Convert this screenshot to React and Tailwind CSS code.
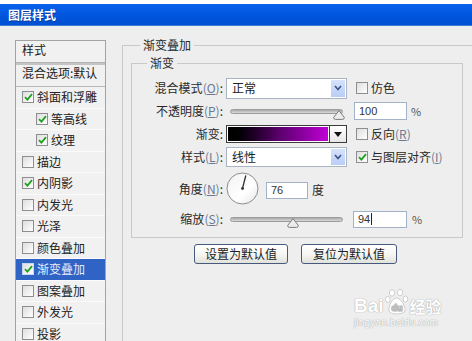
import React from "react";

function Check({ checked, className = "" }) {
  return (
    <span
      className={`inline-flex shrink-0 w-[12px] h-[12px] items-center justify-center border border-[#8e8e8e] bg-linear-to-br from-[#dedede] to-white ${className}`}
    >
      {checked && (
        <svg width="9" height="8" viewBox="0 0 9 8">
          <path d="M1 4.2 L3.4 6.6 L8 1.2" stroke="#1fa31f" strokeWidth="1.8" fill="none" />
        </svg>
      )}
    </span>
  );
}

function Key({ k }) {
  return (
    <span className="text-[#6b7a92]">
      (<span className="underline">{k}</span>)
    </span>
  );
}

function Select({ value, h }) {
  return (
    <div className={`flex w-[121px] ${h} bg-white border border-[#a9b4c4]`}>
      <div className="flex-1 flex items-center pl-[5px] text-[12px] text-[#222]">{value}</div>
      <div className="w-[14px] m-[1px] flex items-center justify-center bg-linear-to-b from-[#d6e2fb] to-[#b9cdf6]">
        <svg width="8" height="6" viewBox="0 0 8 6">
          <polyline points="1,1 4,4.5 7,1" stroke="#3b5486" strokeWidth="1.6" fill="none" />
        </svg>
      </div>
    </div>
  );
}

function Slider({ pos }) {
  return (
    <div className="relative w-[121px] h-full flex items-center px-[4px]">
      <div className="w-[113px] h-[5px] rounded-full border border-[#9c9c9c] bg-linear-to-b from-[#a9a9a9] to-[#dadada]" />
      <svg
        className="absolute top-[50%] mt-[-1px]"
        style={{ left: pos }}
        width="12"
        height="10"
        viewBox="0 0 12 10"
      >
        <path d="M6 0.6 L11.3 7.4 Q11.5 9.4 9.5 9.4 L2.5 9.4 Q0.5 9.4 0.7 7.4 Z" fill="#ececec" stroke="#7b7b7b" strokeWidth="1" />
      </svg>
    </div>
  );
}

function Input({ value, w, h, caret }) {
  return (
    <div
      className={`flex items-center ${w} ${h} bg-white border border-[#a2b2c8] pl-[4px] text-[11px] text-[#333] font-['Liberation_Sans',sans-serif]`}
    >
      {value}
      {caret && <span className="w-[1px] h-[12px] bg-[#222] ml-[1px]" />}
    </div>
  );
}

function Dial() {
  return (
    <svg width="33" height="33" viewBox="0 0 33 33">
      <defs>
        <linearGradient id="dg" x1="0" y1="0" x2="1" y2="1">
          <stop offset="0" stopColor="#f2f2f2" />
          <stop offset="0.6" stopColor="#ffffff" />
          <stop offset="1" stopColor="#e4e4e4" />
        </linearGradient>
      </defs>
      <circle cx="16.5" cy="16.5" r="15.5" fill="url(#dg)" stroke="#8c8c8c" strokeWidth="1" />
      <line x1="16.5" y1="16.5" x2="19.8" y2="3.5" stroke="#333" strokeWidth="1.3" />
      <circle cx="16.5" cy="16.5" r="1.4" fill="#333" />
    </svg>
  );
}

const items = [
  { t: "斜面和浮雕", c: true },
  { t: "等高线", c: true, ind: true },
  { t: "纹理", c: true, ind: true },
  { t: "描边", c: false },
  { t: "内阴影", c: true },
  { t: "内发光", c: false },
  { t: "光泽", c: false },
  { t: "颜色叠加", c: false },
  { t: "渐变叠加", c: true, sel: true },
  { t: "图案叠加", c: false },
  { t: "外发光", c: false },
  { t: "投影", c: false },
];

function LeftList() {
  return (
    <div className="ml-[15px] mt-[14px] w-[91px] shrink-0 border border-[#a3a3a3] bg-[#f1f1f1] text-[12px] text-[#222]">
      <div className="h-[21px] pt-[2px] px-[6px] leading-[14px]">样式</div>
      <div className="h-[3px] bg-[#c4c4c4] border-t border-[#b2b2b2]" />
      <div className="h-[21px] pt-[1px] px-[6px] leading-[14px] whitespace-nowrap">混合选项:默认</div>
      <div className="h-[1px] bg-[#b8b8b8]" />
      {items.map((it) => (
        <div
          key={it.t}
          className={`h-[21.5px] flex items-center border-b border-[#fbfbfb] ${it.sel ? "bg-[#2f64c4] text-[#e4ecff]" : ""} ${it.ind ? "pl-[20px]" : "pl-[6px]"}`}
        >
          <Check checked={it.c} className={it.sel ? "border-[#c8d6f2]" : ""} />
          <span className="ml-[3px] whitespace-nowrap leading-[14px]">{it.t}</span>
        </div>
      ))}
    </div>
  );
}

function Row({ label, h, children }) {
  return (
    <div className={`flex items-center ${h}`}>
      <div className="w-[91px] text-right whitespace-nowrap">{label}</div>
      <div className="ml-[3px] flex items-center h-full">{children}</div>
    </div>
  );
}

function Button({ children, w }) {
  return (
    <div
      className={`${w} h-[20px] flex items-center justify-center rounded-[3px] border border-[#47597c] bg-linear-to-b from-white via-[#f6f6f3] to-[#e2e2dc] text-[12px] text-[#222]`}
    >
      {children}
    </div>
  );
}

function Watermark() {
  return (
    <div className="absolute left-[354px] top-[288px] flex flex-col items-start text-white [text-shadow:0_0_1px_#a9a9a9,0_0_1px_#a9a9a9]">
      <div className="flex items-end h-[28px]">
        <span className="text-[19px] font-bold leading-[20px] font-['Liberation_Sans',sans-serif]">Bai</span>
        <svg width="24" height="28" viewBox="0 0 24 28" className="mx-[1px]">
          <g fill="#ffffff" stroke="#c2c2c2" strokeWidth="0.8">
            <ellipse cx="7" cy="5" rx="2.6" ry="3.3" />
            <ellipse cx="15" cy="4.5" rx="2.6" ry="3.3" />
            <ellipse cx="2.8" cy="11.5" rx="2.4" ry="3" />
            <ellipse cx="20.5" cy="11" rx="2.4" ry="3" />
            <path d="M11.5 10 C7 10 3 19 4 23 C5 27 18 27 20 23 C21 19 16 10 11.5 10 Z" />
          </g>
          <text x="12" y="23" textAnchor="middle" fontSize="9" fontWeight="bold" fill="#ffffff" stroke="#bdbdbd" strokeWidth="0.5" fontFamily="Liberation Sans, sans-serif">du</text>
        </svg>
        <span className="text-[16px] leading-[20px] font-bold">经验</span>
      </div>
      <div className="text-[10px] leading-[12px] mt-[1px] font-['Liberation_Sans',sans-serif] tracking-[0.2px]">jingyan.baidu.com</div>
    </div>
  );
}

export default function App() {
  return (
    <div className="relative w-[472px] h-[341px] overflow-hidden bg-[#eeeeee] flex flex-col font-['Noto_Sans_CJK_SC','Noto_Sans',sans-serif] text-[12px] text-[#2a2a2a]">
      <div className="h-[4px] bg-white shrink-0" />
      <div className="h-[22px] shrink-0 flex items-center pl-[8px] bg-linear-to-b from-[#0b62ec] via-[#0056de] to-[#0050d2] border-b border-[#3f7bd6] text-white font-bold text-[12px] [text-shadow:1px_1px_0_#0a3aa0]">
        图层样式
      </div>
      <div className="flex items-start flex-1">
        <LeftList />
        <div className="ml-[16px] mt-[19px] w-[380px] h-[330px] shrink-0 border-l border-t border-[#c9c9c9]">
          <div className="-mt-[8px] ml-[17px] px-[3px] w-fit leading-[14px] bg-[#eeeeee]">渐变叠加</div>
          <div className="ml-[8px] mt-[11px] w-[332px] border border-[#c9c9c9]">
            <div className="-mt-[8px] ml-[15px] px-[3px] w-fit leading-[14px] bg-[#eeeeee]">渐变</div>
            <div className="mt-[7px] pb-[7px] flex flex-col">
              <Row label={<>混合模式<Key k="O" />:</>} h="h-[22px]">
                <Select value="正常" h="h-[21px]" />
                <Check className="ml-[9px]" />
                <span className="ml-[3px]">仿色</span>
              </Row>
              <Row label={<>不透明度<Key k="P" />:</>} h="h-[24px]">
                <Slider pos="107px" />
                <div className="ml-[7px]">
                  <Input value="100" w="w-[53px]" h="h-[18px]" />
                </div>
                <span className="ml-[4px] text-[11px] text-[#555]">%</span>
              </Row>
              <Row label="渐变:" h="h-[22px]">
                <div className="w-[104px] h-[18px] border border-[#3c3c3c] p-[1px] bg-white">
                  <div className="w-full h-full bg-linear-to-r from-black via-[#58006a] to-[#c000d6]" />
                </div>
                <div className="w-[17px] h-[18px] border border-l-0 border-[#3c3c3c] bg-linear-to-b from-white to-[#e6e6e6] flex items-center justify-center">
                  <svg width="8" height="5" viewBox="0 0 8 5">
                    <path d="M0 0 L8 0 L4 5 Z" fill="#111" />
                  </svg>
                </div>
                <Check className="ml-[9px]" />
                <span className="ml-[3px]">反向<Key k="R" /></span>
              </Row>
              <Row label={<>样式<Key k="L" />:</>} h="h-[24px]">
                <Select value="线性" h="h-[20px]" />
                <Check checked className="ml-[9px]" />
                <span className="ml-[3px]">与图层对齐<Key k="I" /></span>
              </Row>
              <Row label={<>角度<Key k="N" />:</>} h="h-[39px]">
                <Dial />
                <div className="ml-[7px] mt-[3px]">
                  <Input value="76" w="w-[42px]" h="h-[17px]" />
                </div>
                <span className="ml-[4px] mt-[2px]">度</span>
              </Row>
              <Row label={<>缩放<Key k="S" />:</>} h="h-[22px]">
                <Slider pos="61px" />
                <div className="ml-[6px]">
                  <Input value="94" w="w-[54px]" h="h-[17px]" caret />
                </div>
                <span className="ml-[5px] text-[11px] text-[#555]">%</span>
              </Row>
            </div>
          </div>
          <div className="mt-[6px] ml-[71px] flex gap-[13px]">
            <Button w="w-[94px]">设置为默认值</Button>
            <Button w="w-[96px]">复位为默认值</Button>
          </div>
        </div>
      </div>
      <Watermark />
    </div>
  );
}
